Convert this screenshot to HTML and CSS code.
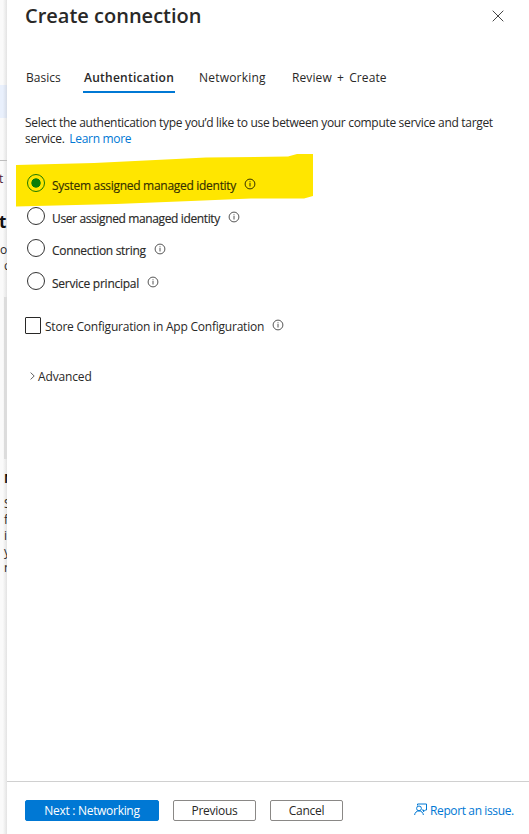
FILE: index.html
```html
<!DOCTYPE html>
<html lang="en">
<head>
<meta charset="utf-8">
<title>Create connection</title>
<link rel="stylesheet" href="styles.css">
</head>
<body>
<svg class="defs" aria-hidden="true">
  <symbol id="info" viewBox="0 0 12 12"><circle cx="6" cy="6" r="4.9" fill="none" stroke="currentColor"/><path d="M6 5v3.5M6 3.3v1" stroke="currentColor"/></symbol>
</svg>
<div class="app">
  <aside class="backdrop">
    <div class="selected"></div>
    <div class="rule"></div>
    <p class="cut tab">t ·</p>
    <p class="cut heading">t</p>
    <p class="cut first">o</p>
    <p class="cut second">c</p>
    <div class="tile"></div>
    <p class="name">M</p>
    <p class="copy">S<br>f<br>i<br>y<br>n</p>
  </aside>
  <main class="panel">
    <header class="header">
      <h1>Create connection</h1>
      <svg class="close" viewBox="0 0 12 12"><path d="M.7.7l10.6 10.6M11.3.7L.7 11.3" stroke="#444" fill="none"/></svg>
    </header>
    <nav class="tabs">
      <a class="basics">Basics</a>
      <a class="active">Authentication</a>
      <a class="networking">Networking</a>
      <a class="review">Review + Create</a>
    </nav>
    <p class="intro"><span class="line">Select the authentication type you’d like to use between your compute service and target</span><br>service. <a class="learn">Learn more</a></p>
    <div class="options">
      <svg class="marker" viewBox="0 0 298 54"><path d="M0 12L78 10 160 6 190 4.5 272 3.5 281 1 297 1V43L288 45.500 235 45.500 175 48 100 51 0 53.500Z" fill="#ffe600"/></svg>
      <div class="option checked"><i class="radio"></i><span class="label system">System assigned managed identity</span><svg class="info"><use href="#info"/></svg></div>
      <div class="option"><i class="radio"></i><span class="label user">User assigned managed identity</span><svg class="info"><use href="#info"/></svg></div>
      <div class="option"><i class="radio"></i><span class="label connection">Connection string</span><svg class="info"><use href="#info"/></svg></div>
      <div class="option"><i class="radio"></i><span class="label principal">Service principal</span><svg class="info"><use href="#info"/></svg></div>
    </div>
    <div class="store"><i class="checkbox"></i><span class="store-label">Store Configuration in App Configuration</span><svg class="info"><use href="#info"/></svg></div>
    <div class="advanced"><svg class="chevron" viewBox="0 0 5 8"><path d="M.6.6L4.2 4 .6 7.4" fill="none" stroke="#555" stroke-width=".9"/></svg><span>Advanced</span></div>
    <footer class="footer">
      <button class="next"><span>Next : Networking</span></button>
      <button class="previous"><span>Previous</span></button>
      <button class="cancel"><span>Cancel</span></button>
      <a class="report"><svg class="feedback" viewBox="0 0 13 13"><g fill="none" stroke="currentColor"><path d="M3.500 2.500V1h9v6h-1.200L9.500 8.800V7H8"/><circle cx="5" cy="5.400" r="2.400"/><path d="M.6 12c.3-2.400 2-4.100 4.400-4.100S9.100 9.600 9.400 12"/></g></svg><span>Report an issue.</span></a>
    </footer>
  </main>
</div>
</body>
</html>
```
FILE: styles.css
```css
* { box-sizing: border-box; }
body { margin: 0; font: 12px/16px "Open Sans", "Noto Sans", sans-serif; color: #292827; background: #fff; }
h1, p { margin: 0; }
.defs { display: none; }
.app { display: flex; width: 529px; height: 834px; overflow: hidden; }

.backdrop { width: 7px; height: 834px; flex: none; overflow: hidden; background: linear-gradient(90deg, #fafafa 40%, #e3e3e3); white-space: nowrap; }
.selected { height: 33px; margin-top: 85px; background: linear-gradient(90deg, #e9f0fc 40%, #d5dbe6); }
.rule { height: 1px; margin-top: 42px; background: #bdbdbd; }
.cut { height: 16px; }
.tab { margin-top: 10px; margin-left: -1px; color: #4a1c3c; }
.heading { margin-top: 27px; margin-left: -1px; font-size: 17px; font-weight: 700; line-height: 16px; color: #111; }
.first { margin-top: 12px; }
.second { margin-left: 4px; }
.tile { height: 162px; margin: 23px 0 0 4px; background: #dcdcdc; }
.name { margin: 11px 0 0 4px; font-size: 13px; font-weight: 700; color: #111; }
.copy { margin: 10px 0 0 4px; }

.panel { width: 522px; display: flex; flex-direction: column; flex: none; background: #fff; }
.header { height: 69px; padding: 4px 25px 0 18px; display: flex; justify-content: space-between; }
h1 { font-size: 20px; font-weight: 600; line-height: 24px; white-space: nowrap; }
.close { width: 12px; height: 12px; margin-top: 6px; }
.tabs { height: 24px; display: flex; font-size: 12px; line-height: 17px; white-space: nowrap; padding-left: 19px; }
.basics { width: 57px; }
.active { width: 92px; margin-right: 24px; padding-left: 1px; border-bottom: 2px solid #0078d4; font-weight: 600; letter-spacing: .25px; }
.networking { width: 93px; letter-spacing: .2px; }
.review { letter-spacing: .1px; word-spacing: 2px; }
.intro { height: 41px; margin: 22px 0 0 18px; white-space: nowrap; letter-spacing: -.315px; }
.learn, .report { color: #0078d4; }
.learn { margin-left: 2px; }

.options { position: relative; margin: 17px 0 0 20px; }
.marker { position: absolute; left: -11px; top: -20px; width: 298px; height: 54px; }
.option { position: relative; height: 33px; display: flex; }
.option:nth-child(3) { height: 32px; }
.radio { width: 18px; height: 18px; margin: 1px 7px 0 0; border: 1px solid #333; border-radius: 50%; flex: none; }
.checked .radio { border-color: #1d7800; background: radial-gradient(circle, #087d08 4.300px, transparent 5px); }
.checked .label, .checked .info { color: #343000; }
.label { margin-top: 5px; white-space: nowrap; -webkit-text-stroke: .15px currentColor; }
.system { letter-spacing: -.29px; }
.user { letter-spacing: -.37px; }
.connection { letter-spacing: -.3px; }
.principal { letter-spacing: -.25px; }
.info { width: 12px; height: 12px; margin: 5px 0 0 8px; color: #555; flex: none; }
.store { height: 18px; display: flex; margin: 13px 0 0 18px; white-space: nowrap; }
.checkbox { width: 16px; height: 17px; border: 1px solid #292827; border-radius: 1px; margin-right: 4px; }
.store-label { margin-top: 2px; letter-spacing: -.22px; }
.store .info { margin-top: 2px; }
.advanced { display: flex; margin: 34px 0 0 23px; letter-spacing: -.15px; }
.chevron { width: 5px; height: 8px; margin: 3px 3px 0 0; }

.footer { height: 53px; margin-top: auto; padding: 18px 0 0 18px; display: flex; align-items: flex-start; border-top: 1px solid #d0d0d0; white-space: nowrap; }
button { height: 21px; padding: 0; border: 1px solid #8a8886; border-radius: 2px; background: #fff; color: inherit; font: inherit; font-weight: 500; line-height: 19px; letter-spacing: -.3px; }
.next { width: 134px; color: #fff; border-color: #0078d4; background: #0078d4; }
.previous { width: 83px; margin-left: 14px; }
.cancel { width: 73px; margin-left: 14px; }
.report { display: flex; margin-left: 71px; padding-top: 3px; letter-spacing: -.38px; }
.feedback { width: 13px; height: 13px; margin-right: 3px; }
```
